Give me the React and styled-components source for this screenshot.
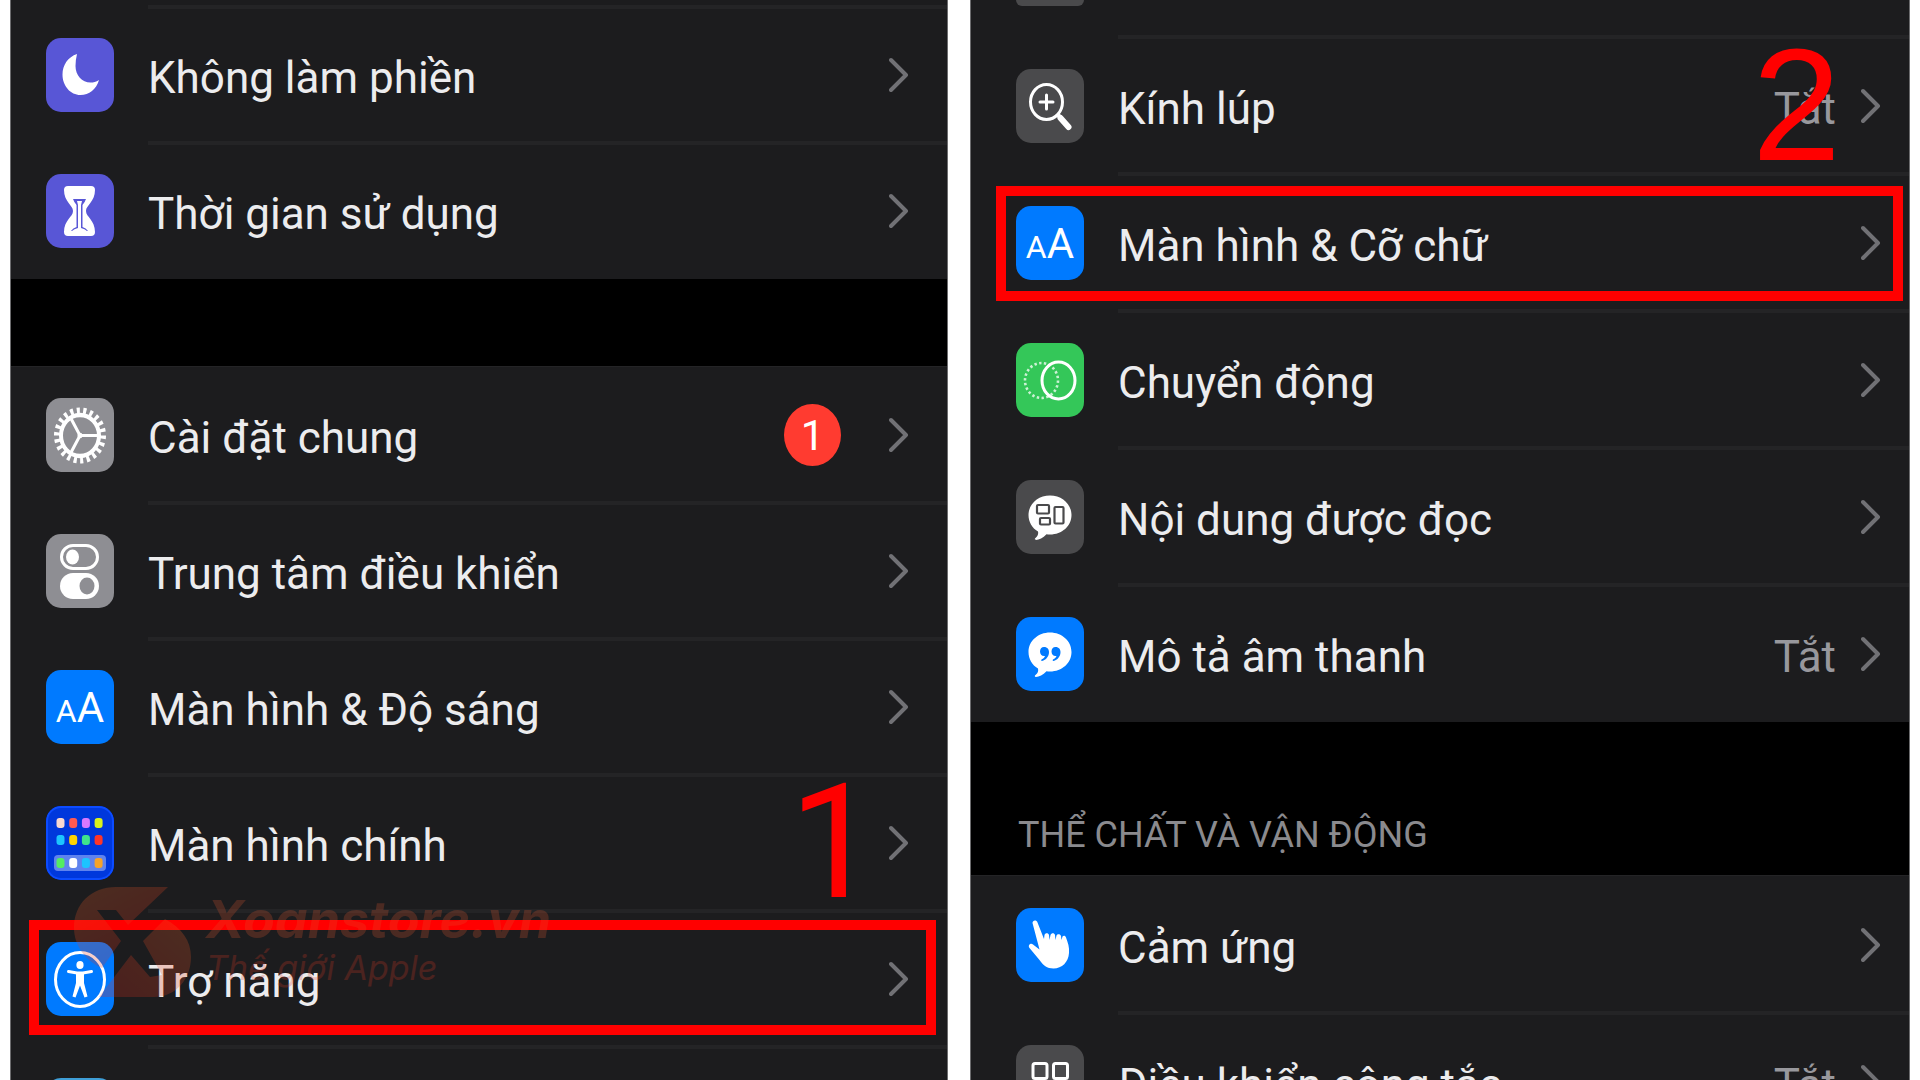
import React from "react";
import styled, { createGlobalStyle } from "styled-components";

const GlobalStyle = createGlobalStyle`
  *, *::before, *::after { box-sizing: border-box; }
  body {
    margin: 0;
    background: #fff;
    font-family: Roboto, "Liberation Sans", sans-serif;
  }
`;

const Page = styled.main`
  position: relative;
  display: grid;
  grid-template-columns: 469fr 470fr;
  gap: 22px;
  height: 100vh;
  padding: 0 10px;
  overflow: hidden;
`;

const Panel = styled.section`
  min-width: 0;
  background: #1c1c1e;
  border: solid #6c6c6e;
  border-width: 0 1px;
  overflow: hidden;
`;

const List = styled.ul`
  margin: 0;
  padding: 0;
  list-style: none;
`;

const Item = styled.li`
  position: relative;
  &:not(:last-child)::after {
    content: "";
    position: absolute;
    left: ${(p) => (p.$wide ? 147 : 137)}px;
    right: 0;
    bottom: -2px;
    height: 4px;
    background: #242426;
  }
`;

const Peek = styled(Item)`
  display: flex;
  align-items: flex-start;
  height: ${(p) => p.$height}px;
  padding-left: 45px;
`;

const PeekTile = styled.span`
  width: 68px;
  height: 6px;
  border-radius: 0 0 14px 14px;
  background: #4a4a4c;
`;

const Row = styled.button`
  display: flex;
  align-items: center;
  width: 100%;
  height: ${(p) => (p.$wide ? 137 : 136)}px;
  padding: ${(p) => (p.$wide ? "0 28px 0 45px" : "0 38px 0 35px")};
  border: 0;
  background: none;
  color: #ececee;
  font: inherit;
  text-align: left;
  cursor: pointer;
`;

const Tile = styled.span`
  display: flex;
  flex: none;
  align-items: baseline;
  justify-content: center;
  width: 68px;
  height: 74px;
  border-radius: 15px;
  overflow: hidden;
  background: ${(p) => p.$color};
  svg { display: block; }
`;

const Letter = styled.span`
  color: #fff;
  font-size: ${(p) => (p.$large ? 42 : 32)}px;
  line-height: 76px;
`;

const Label = styled.span`
  flex: 1;
  padding: 6px 0 0 34px;
  font-size: 44px;
  line-height: 56px;
  white-space: nowrap;
`;

const Value = styled.span`
  padding-top: 6px;
  margin-right: 25px;
  color: #98989d;
  font-size: 44px;
  line-height: 56px;
`;

const Badge = styled.span`
  width: 57px;
  height: 62px;
  margin-right: 48px;
  border-radius: 50%;
  background: #ff3b30;
  color: #fff;
  font-size: 42px;
  line-height: 64px;
  text-align: center;
`;

const Gap = styled.div`
  display: flex;
  align-items: flex-end;
  height: ${(p) => p.$height}px;
  padding: 0 47px 18px;
  background: #000;
  border-bottom: 1px solid #242426;
`;

const Heading = styled.h2`
  margin: 0;
  color: #8a8a8e;
  font-size: 36px;
  font-weight: 400;
  line-height: 44px;
  white-space: nowrap;
`;

const Frame = styled.span`
  position: absolute;
  top: ${(p) => (p.$wide ? 12 : 9)}px;
  left: ${(p) => (p.$wide ? 25 : 18)}px;
  right: ${(p) => (p.$wide ? 6 : 11)}px;
  height: 115px;
  border: 10px solid #f00;
  pointer-events: none;
`;

const StepNumber = styled.span`
  position: absolute;
  z-index: 1;
  top: -12px;
  right: 68px;
  color: #f00;
  font-family: ${(p) => p.$family}, sans-serif;
  font-size: 160px;
  line-height: 160px;
  pointer-events: none;
`;

const Watermark = styled.div`
  position: absolute;
  z-index: 2;
  left: 74px;
  top: 886px;
  display: flex;
  gap: 14px;
  opacity: 0.24;
  pointer-events: none;
  svg { display: block; }
`;

const MarkText = styled.div`
  padding-top: 6px;
  font-family: Inter, sans-serif;
  font-style: italic;
  white-space: nowrap;
`;

const MarkName = styled.div`
  color: #e0562f;
  font-size: 52px;
  font-weight: 700;
  line-height: 56px;
`;

const MarkTagline = styled.div`
  color: #e03a26;
  font-size: 34px;
  line-height: 40px;
`;

const Glyph = ({ children }) => (
  <svg width="68" height="74" viewBox="0 0 68 74" fill="none" aria-hidden="true">
    {children}
  </svg>
);

const Chevron = () => (
  <svg width="20" height="36" viewBox="0 0 20 36" fill="none" aria-hidden="true">
    <path d="M2 3 L17 18 L2 33" stroke="#717175" strokeWidth="4" strokeLinecap="round" strokeLinejoin="round" />
  </svg>
);

const Moon = () => (
  <Glyph>
    <path fill="#fff" d="M31 16C22 19 16.5 27 16.5 36.5 16.5 48 24.5 57 34.5 57 43 57 50.500 51 53 42 50 44 47.500 44.500 44.500 44.500 36 44.500 29.500 37 29.500 28 29.500 24 30 20 31 16Z" />
  </Glyph>
);

const Hourglass = () => (
  <Glyph>
    <path fill="#fff" d="M22 12H45Q49 12 49 16C49 28 40 31 40 37S49 46 49 58Q49 62 45 62H22Q18 62 18 58C18 46 27 43 27 37S18 28 18 16Q18 12 22 12Z" />
    <path fill="#5856d6" d="M27 25H40Q39 28 36.500 31V53Q40 54 42 57H25Q27 54 30.500 53V31Q28 28 27 25Z" />
    <path fill="#fff" d="M31 27H36L35 31V54Q39 55 41 57H26Q28 55 32 54V31Z" />
  </Glyph>
);

const Gear = () => (
  <Glyph>
    <g transform="translate(34 37.500) scale(1 1.080)" stroke="#fff">
      <circle r="23" strokeWidth="6" pathLength="88" strokeDasharray="1.900 2.100" />
      <circle r="19" strokeWidth="4" />
      <path d="M0 0H19M0 0L-9.500 -16.500M0 0L-9.500 16.500" strokeWidth="3" />
      <circle r="2" fill="#fff" />
    </g>
  </Glyph>
);

const Toggles = () => (
  <Glyph>
    <rect x="15.500" y="11.500" width="36" height="23" rx="11.500" stroke="#fff" strokeWidth="3" />
    <ellipse cx="26.500" cy="23" rx="6.500" ry="7.500" fill="#fff" />
    <rect x="14" y="39" width="39" height="26" rx="13" fill="#fff" />
    <ellipse cx="41" cy="52" rx="7.500" ry="8.500" fill="#8e8e93" />
  </Glyph>
);

const homeDots = [
  [17, ["#f8d8d0", "#ff5a52", "#d978ff", "#d9f21c"]],
  [34, ["#1cc4ff", "#ffd400", "#3fe48c", "#ff3528"]],
  [57, ["#54ec62", "#fff", "#1cc4ff", "#f5a32a"]],
];

const HomeGrid = () => (
  <Glyph>
    <rect x="1" y="1" width="66" height="72" rx="14" stroke="#0c4cff" strokeWidth="2" />
    <rect x="8" y="49" width="52" height="16" rx="4" fill="#5f83ee" />
    {homeDots.map(([y, colors]) =>
      colors.map((c, i) => (
        <rect key={`${y}-${i}`} x={10.5 + i * 12.7} y={y - 5} width="8" height="10" rx="3" fill={c} />
      ))
    )}
  </Glyph>
);

const Person = () => (
  <Glyph>
    <ellipse cx="34" cy="37.500" rx="24.500" ry="27" stroke="#fff" strokeWidth="3" />
    <ellipse cx="34" cy="23" rx="3.600" ry="4" fill="#fff" />
    <path d="M22.500 29.500L31 31H37L45.500 29.500" stroke="#fff" strokeWidth="3" strokeLinecap="round" />
    <path fill="#fff" d="M30 30H38V41L41.500 54.500 38.500 55.500 34 43.500 29.500 55.500 26.500 54.500 30 41Z" />
  </Glyph>
);

const Magnifier = () => (
  <Glyph>
    <ellipse cx="30.500" cy="33" rx="16" ry="17.500" stroke="#fff" strokeWidth="3" />
    <path d="M30.500 26V40M24 33H37" stroke="#fff" strokeWidth="3" strokeLinecap="round" />
    <path d="M42 46L44 48" stroke="#fff" strokeWidth="4" />
    <path d="M44.500 49L52.500 58" stroke="#fff" strokeWidth="6" strokeLinecap="round" />
  </Glyph>
);

const Motion = () => (
  <Glyph>
    <ellipse cx="25.500" cy="37.500" rx="16.500" ry="17.500" stroke="#fff" strokeWidth="2.600" pathLength="88" strokeDasharray="2 2" opacity="0.75" />
    <ellipse cx="42.500" cy="37.500" rx="16.500" ry="18.500" stroke="#fff" strokeWidth="3" />
  </Glyph>
);

const Bubble = () => (
  <path fill="#fff" d="M34 15.500C46 15.500 55.500 24 55.500 35S46 54.500 34 54.500Q32 54.500 30.500 54.200C27 58 23 59.500 20 60 18.500 60 18.500 58.500 19.500 58 22 56 22.500 54 22 51.500 16 48 12.500 42 12.500 35 12.500 24 22 15.500 34 15.500Z" />
);

const SpokenContent = () => (
  <Glyph>
    <Bubble />
    <g stroke="#4a4a4c" strokeWidth="2.200">
      <rect x="21" y="25" width="12" height="8.500" rx="1" />
      <rect x="24" y="38" width="10" height="6.500" rx="1" />
      <rect x="38.500" y="27" width="9" height="16.500" rx="1" />
    </g>
  </Glyph>
);

const AudioDescription = () => (
  <Glyph>
    <Bubble />
    <path fill="#007aff" d="M28 30C31.500 30 33 32.500 33 35 33 39.500 30 43 26 44 25 44 25 43 25.500 42.500 27.500 41.500 28.500 40.500 29 39 26 39.500 24 37.500 24 34.500 24 32 25.500 30 28 30ZM39.500 30C43 30 44.500 32.500 44.500 35 44.500 39.500 41.500 43 37.500 44 36.500 44 36.500 43 37 42.500 39 41.500 40 40.500 40.500 39 37.500 39.500 35.500 37.500 35.500 34.500 35.500 32 37 30 39.500 30Z" />
  </Glyph>
);

const Hand = () => (
  <Glyph>
    <path fill="#fff" d="M16.500 15C16.500 12 20.500 11.500 21.500 14.500L28 31 28.500 27C29 24.500 32.500 24.500 33 27L33.500 32 34.500 27C35.500 24.500 38.500 25 39 27L39.500 32 40.500 27.500C41.500 25.500 44.500 26 45 28L45.500 32 46.500 28.500C47.500 27 49.500 27.500 50 29.500 52 35 53.500 39 53 45 52.500 54 46 60.500 37.500 60.500 31 60.500 27 57 23.500 52L13.500 40C11.500 37.500 14.500 34.500 17 36.500L23.500 41.500Z" />
  </Glyph>
);

const SwitchControl = () => (
  <Glyph>
    <g stroke="#fff" strokeWidth="3">
      <rect x="17" y="18.500" width="14" height="15" rx="2" />
      <rect x="37.500" y="18.500" width="14" height="15" rx="2" />
      <rect x="17" y="41" width="14" height="15" rx="2" />
      <rect x="37.500" y="41" width="14" height="15" rx="2" />
    </g>
  </Glyph>
);

const TextSize = () => (
  <>
    <Letter>A</Letter>
    <Letter $large>A</Letter>
  </>
);

const focusRows = [
  { label: "Không làm phiền", color: "#5856d6", icon: <Moon /> },
  { label: "Thời gian sử dụng", color: "#5856d6", icon: <Hourglass /> },
];

const generalRows = [
  { label: "Cài đặt chung", color: "#8e8e93", icon: <Gear />, badge: "1" },
  { label: "Trung tâm điều khiển", color: "#8e8e93", icon: <Toggles /> },
  { label: "Màn hình & Độ sáng", color: "#007aff", icon: <TextSize /> },
  { label: "Màn hình chính", color: "#0038dc", icon: <HomeGrid />, step: "1", family: "Roboto" },
  { label: "Trợ năng", color: "#007aff", icon: <Person />, framed: true },
  { label: "", color: "#3f9fd8" },
];

const visionRows = [
  { label: "Kính lúp", color: "#4a4a4c", icon: <Magnifier />, value: "Tắt", step: "2", family: '"Liberation Sans"' },
  { label: "Màn hình & Cỡ chữ", color: "#007aff", icon: <TextSize />, framed: true },
  { label: "Chuyển động", color: "#34c759", icon: <Motion /> },
  { label: "Nội dung được đọc", color: "#4a4a4c", icon: <SpokenContent /> },
  { label: "Mô tả âm thanh", color: "#007aff", icon: <AudioDescription />, value: "Tắt" },
];

const motorRows = [
  { label: "Cảm ứng", color: "#007aff", icon: <Hand /> },
  { label: "Điều khiển công tắc", color: "#4a4a4c", icon: <SwitchControl />, value: "Tắt" },
];

const SettingRow = ({ row, wide }) => (
  <Item $wide={wide}>
    <Row type="button" $wide={wide}>
      <Tile $color={row.color}>{row.icon}</Tile>
      <Label>{row.label}</Label>
      {row.value && <Value>{row.value}</Value>}
      {row.badge && <Badge>{row.badge}</Badge>}
      <Chevron />
    </Row>
    {row.framed && <Frame $wide={wide} />}
    {row.step && <StepNumber $family={row.family}>{row.step}</StepNumber>}
  </Item>
);

const rowsOf = (rows, wide) => rows.map((row, i) => <SettingRow key={i} row={row} wide={wide} />);

export default function App() {
  return (
    <>
      <GlobalStyle />
      <Page>
        <Panel>
          <List>
            <Peek $height={7} />
            {rowsOf(focusRows, false)}
          </List>
          <Gap $height={88} />
          <List>{rowsOf(generalRows, false)}</List>
        </Panel>
        <Panel>
          <List>
            <Peek $wide $height={37}>
              <PeekTile />
            </Peek>
            {rowsOf(visionRows, true)}
          </List>
          <Gap $height={154}>
            <Heading>THỂ CHẤT VÀ VẬN ĐỘNG</Heading>
          </Gap>
          <List>{rowsOf(motorRows, true)}</List>
        </Panel>
        <Watermark>
          <svg width="118" height="112" viewBox="0 0 118 112" aria-hidden="true">
            <defs>
              <linearGradient id="markTop" x1="0" y1="0" x2="0.600" y2="1">
                <stop offset="0" stopColor="#e8642c" />
                <stop offset="1" stopColor="#e0281c" />
              </linearGradient>
              <linearGradient id="markBottom" x1="1" y1="0" x2="0" y2="1">
                <stop offset="0" stopColor="#e8642c" />
                <stop offset="1" stopColor="#e0281c" />
              </linearGradient>
            </defs>
            <path fill="url(#markTop)" d="M94 1H42C17 1 0 18 0 42 0 58 10 74 28 82L47 55 23 24H42L54 39Z" />
            <path fill="url(#markBottom)" d="M91 33C108 42 117 55 117 71 117 93 102 111 80 111H25L57 69 76 91 88 89 69 55Z" />
          </svg>
          <MarkText>
            <MarkName>Xoanstore.vn</MarkName>
            <MarkTagline>Thế giới Apple</MarkTagline>
          </MarkText>
        </Watermark>
      </Page>
    </>
  );
}
